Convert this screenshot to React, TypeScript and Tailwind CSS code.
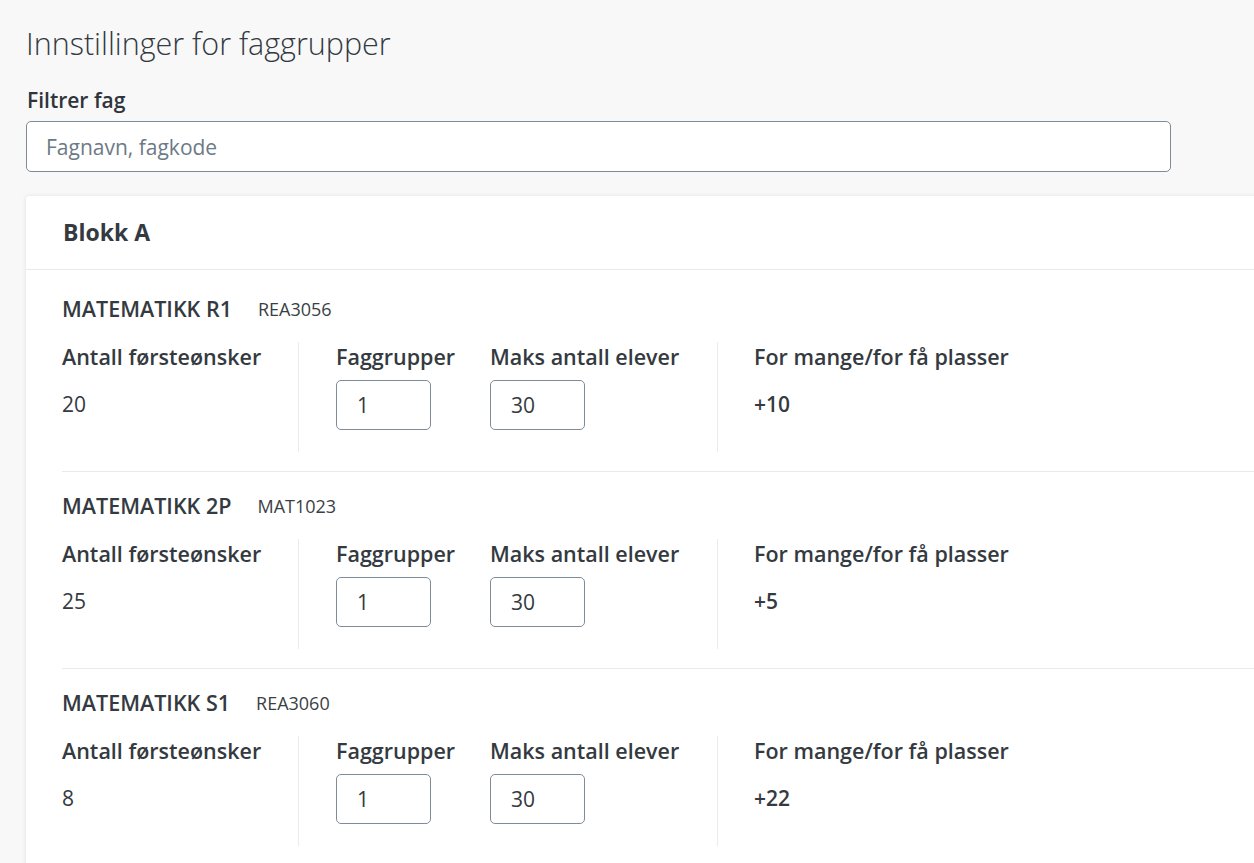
import React from "react";

type Subject = {
  name: string;
  code: string;
  firstChoices: number;
  groups: number;
  maxStudents: number;
  diff: string;
};

const subjects: Subject[] = [
  { name: "MATEMATIKK R1", code: "REA3056", firstChoices: 20, groups: 1, maxStudents: 30, diff: "+10" },
  { name: "MATEMATIKK 2P", code: "MAT1023", firstChoices: 25, groups: 1, maxStudents: 30, diff: "+5" },
  { name: "MATEMATIKK S1", code: "REA3060", firstChoices: 8, groups: 1, maxStudents: 30, diff: "+22" },
];

function NumberBox({ value }: { value: number }) {
  return (
    <input
      type="text"
      defaultValue={String(value)}
      className="h-[50px] w-[95px] rounded-[5px] border border-[#7f8c98] bg-white pl-[20px] text-[21px] text-[#343a40] outline-none"
    />
  );
}

function SubjectRow({ s }: { s: Subject }) {
  return (
    <div className="border-b border-[#e9e9e9] pt-[22px] pb-[19px]">
      <div className="flex h-[24px] items-center">
        <span className="text-[21.5px] font-semibold leading-[24px] text-[#343a40]">{s.name}</span>
        <span className="ml-[26px] text-[18px] leading-[24px] text-[#3a3f44]">{s.code}</span>
      </div>
      <div className="mt-[21px] flex h-[110px]">
        <div className="w-[236px] shrink-0">
          <div className="text-[21.5px] font-semibold leading-[30px] text-[#343a40]">Antall førsteønsker</div>
          <div className="mt-[8px] flex h-[50px] items-center text-[21px] text-[#343a40]">{s.firstChoices}</div>
        </div>
        <div className="flex w-[419px] shrink-0 border-l border-[#ebebeb] pl-[37px]">
          <div className="w-[154px] shrink-0">
            <div className="text-[21.5px] font-semibold leading-[30px] text-[#343a40]">Faggrupper</div>
            <div className="mt-[8px]">
              <NumberBox value={s.groups} />
            </div>
          </div>
          <div>
            <div className="text-[21.5px] font-semibold leading-[30px] text-[#343a40]">Maks antall elever</div>
            <div className="mt-[8px]">
              <NumberBox value={s.maxStudents} />
            </div>
          </div>
        </div>
        <div className="border-l border-[#ebebeb] pl-[36px]">
          <div className="text-[21.5px] font-semibold leading-[30px] text-[#343a40]">For mange/for få plasser</div>
          <div className="mt-[8px] flex h-[50px] items-center text-[21px] font-semibold text-[#343a40]">{s.diff}</div>
        </div>
      </div>
    </div>
  );
}

export default function App() {
  return (
    <div
      className="min-h-[863px] overflow-hidden bg-[#f8f8f8] pl-[26px]"
      style={{ fontFamily: "'Open Sans', 'Noto Sans', sans-serif" }}
    >
      <h1 className="pt-[24px] text-[30.5px] font-light leading-[38px] text-[#333a42]">Innstillinger for faggrupper</h1>

      <label className="mt-[24px] block pl-[1px] text-[21px] font-semibold leading-[28px] text-[#2f353b]">Filtrer fag</label>
      <input
        type="text"
        placeholder="Fagnavn, fagkode"
        className="mt-[7px] block h-[51px] w-[1145px] rounded-[5px] border border-[#7f8c98] bg-white pl-[19px] text-[21px] text-[#343a40] outline-none placeholder:text-[#6c7a86]"
      />

      <div className="mt-[24px] w-[1300px] rounded-tl-[3px] bg-white shadow-[0_0_4px_rgba(0,0,0,0.10)]">
        <div className="flex h-[74px] items-center border-b border-[#e9e9e9] pl-[37px]">
          <h2 className="text-[23px] font-bold text-[#343a40]">Blokk A</h2>
        </div>
        <div className="pl-[36px] pt-[5px]">
          {subjects.map((s) => (
            <SubjectRow key={s.code} s={s} />
          ))}
        </div>
      </div>
    </div>
  );
}
